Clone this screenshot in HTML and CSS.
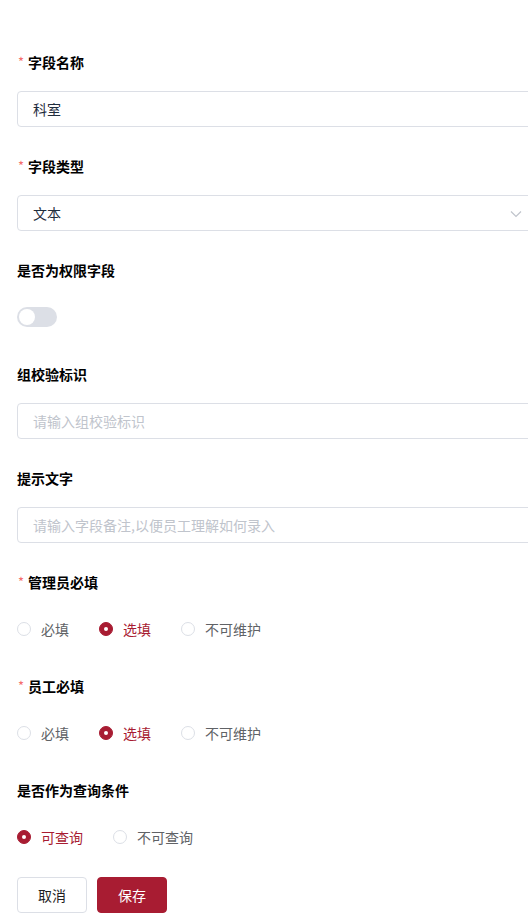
FILE: index.html
```html
<!DOCTYPE html>
<html lang="zh">
<head>
<meta charset="utf-8">
<link rel="stylesheet" href="styles.css">
</head>
<body>
<form class="form">
  <div class="item">
    <div class="label"><span class="req">*</span>字段名称</div>
    <div class="control"><div class="input">科室</div></div>
  </div>
  <div class="item">
    <div class="label"><span class="req">*</span>字段类型</div>
    <div class="control">
      <div class="input select">文本
        <svg class="arrow" width="12" height="8" viewBox="0 0 12 8"><path d="M1 1.5 L6 6.5 L11 1.5" fill="none" stroke="#c0c4cc" stroke-width="1.2"/></svg>
      </div>
    </div>
  </div>
  <div class="item">
    <div class="label">是否为权限字段</div>
    <div class="control"><span class="switch"><span class="knob"></span></span></div>
  </div>
  <div class="item">
    <div class="label">组校验标识</div>
    <div class="control"><div class="input placeholder">请输入组校验标识</div></div>
  </div>
  <div class="item">
    <div class="label">提示文字</div>
    <div class="control"><div class="input placeholder">请输入字段备注,以便员工理解如何录入</div></div>
  </div>
  <div class="item">
    <div class="label"><span class="req">*</span>管理员必填</div>
    <div class="control radios">
      <label class="radio"><span class="dot"></span>必填</label>
      <label class="radio checked"><span class="dot"></span>选填</label>
      <label class="radio"><span class="dot"></span>不可维护</label>
    </div>
  </div>
  <div class="item">
    <div class="label"><span class="req">*</span>员工必填</div>
    <div class="control radios">
      <label class="radio"><span class="dot"></span>必填</label>
      <label class="radio checked"><span class="dot"></span>选填</label>
      <label class="radio"><span class="dot"></span>不可维护</label>
    </div>
  </div>
  <div class="item last">
    <div class="label">是否作为查询条件</div>
    <div class="control radios">
      <label class="radio checked"><span class="dot"></span>可查询</label>
      <label class="radio"><span class="dot"></span>不可查询</label>
    </div>
  </div>
  <div class="actions">
    <button type="button" class="btn">取消</button>
    <button type="button" class="btn primary">保存</button>
  </div>
</form>
</body>
</html>
```
FILE: styles.css
```css
html, body {
  margin: 0;
  padding: 0;
  background: #fff;
  overflow: hidden;
}
body {
  font-family: "Noto Sans CJK SC", "Noto Sans", sans-serif;
  font-size: 14px;
  color: #333;
}
.form {
  padding: 52px 0 0 17px;
  width: 518px;
}
.item {
  margin-bottom: 29px;
}
.item.last {
  margin-bottom: 22px;
}
.label {
  box-sizing: border-box;
  height: 22px;
  padding-bottom: 2px;
  line-height: 20px;
  font-weight: bold;
  color: #000;
  margin-bottom: 17px;
  display: flex;
  align-items: center;
}
.req {
  color: #f56c6c;
  font-weight: normal;
  margin-right: 4px;
  margin-left: 1px;
  font-size: 13px;
}
.control {
  height: 36px;
  display: flex;
  align-items: center;
}
.input {
  box-sizing: border-box;
  width: 518px;
  height: 36px;
  border: 1px solid #dcdfe6;
  border-radius: 4px;
  padding: 0 15px;
  display: flex;
  align-items: center;
  color: #1f2d3d;
  position: relative;
}
.input.placeholder {
  color: #c0c4cc;
}
.arrow {
  position: absolute;
  right: 12px;
  top: 14px;
}
.switch {
  width: 40px;
  height: 20px;
  border-radius: 10px;
  background: #dcdfe6;
  display: flex;
  align-items: center;
  padding: 0 2px;
  box-sizing: border-box;
}
.knob {
  width: 16px;
  height: 16px;
  border-radius: 50%;
  background: #fff;
}
.radios {
  gap: 30px;
}
.radio {
  display: flex;
  align-items: center;
  gap: 10px;
  color: #606266;
  line-height: 1;
}
.dot {
  box-sizing: border-box;
  width: 14px;
  height: 14px;
  border-radius: 50%;
  border: 1px solid #dcdfe6;
  background: #fff;
  display: flex;
  align-items: center;
  justify-content: center;
}
.radio.checked {
  color: #a81c32;
}
.radio.checked .dot {
  background: #a81c32;
  border-color: #a81c32;
}
.radio.checked .dot::after {
  content: "";
  width: 4px;
  height: 4px;
  border-radius: 50%;
  background: #fff;
}
.actions {
  display: flex;
  gap: 10px;
}
.btn {
  box-sizing: border-box;
  width: 70px;
  height: 36px;
  border: 1px solid #dcdfe6;
  border-radius: 4px;
  background: #fff;
  color: #1f1f1f;
  font-family: inherit;
  font-size: 14px;
  padding: 0;
}
.btn.primary {
  background: #a81c32;
  border-color: #a81c32;
  color: #fff;
}
```
